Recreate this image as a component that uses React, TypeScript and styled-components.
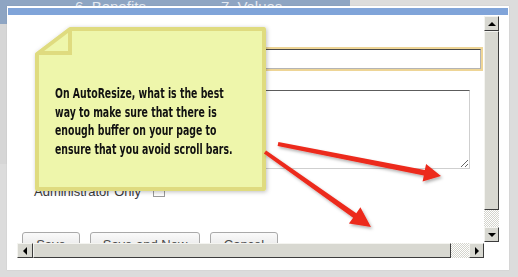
import React from 'react';
import styled, { createGlobalStyle } from 'styled-components';

const GlobalStyle = createGlobalStyle`
  html, body {
    margin: 0;
    padding: 0;
    background: #dcdcdc;
    overflow: hidden;
  }
  * {
    box-sizing: border-box;
  }
`;

const Page = styled.div`
  position: relative;
  width: 518px;
  height: 277px;
  overflow: hidden;
  background: #dcdcdc;
  font-family: 'Liberation Sans', Arial, sans-serif;
`;

const BackTabs = styled.div`
  width: 350px;
  height: 24px;
  background: #8ea5c3;
  display: flex;
  gap: 75px;
  padding: 0 0 0 75px;
`;

const BackTab = styled.span`
  color: #e3e9f1;
  font-size: 15px;
  line-height: 17px;
  margin-top: -2px;
`;

const LeftStrip = styled.div`
  width: 8px;
  height: 140px;
  background: #d6d6d6;
  border-left: 2px solid transparent;
`;

const Window = styled.div`
  position: absolute;
  left: 7px;
  top: 6px;
  width: 502px;
  height: 264px;
  background: #ffffff;
  padding: 2px 1px 0 1px;
  box-shadow: 0 0 1px rgba(0, 0, 0, 0.15);
`;

const TitleBar = styled.div`
  height: 7px;
  background: #80a4d9;
`;

const Frame = styled.div`
  margin: 1px 0 0 9px;
  display: grid;
  grid-template-columns: 467px 15px;
  grid-template-rows: 227px 15px;
`;

const Viewport = styled.div`
  overflow: hidden;
  background: #ffffff;
  position: relative;
`;

const Form = styled.div`
  display: flex;
  flex-direction: column;
  padding-top: 33px;
`;

const TextField = styled.div`
  margin-left: 115px;
  margin-right: 3px;
  height: 20px;
  border: 1px solid #b4b4b4;
  border-top-color: #4a4a4a;
  box-shadow: 0 0 0 2px #eed596;
  background: #fff;
`;

const TextArea = styled.textarea`
  display: block;
  margin: 21px 14px 0 115px;
  width: calc(100% - 129px);
  height: 79px;
  border: 1px solid #cfcfcf;
  border-top-color: #5c5c5c;
  border-left-color: #8a8a8a;
  background: #fff;
  resize: both;
  outline: none;
`;

const CheckRow = styled.div`
  display: flex;
  align-items: center;
  gap: 12px;
  margin: 15px 0 0 17px;
  height: 14px;
`;

const Label = styled.span`
  font-size: 13px;
  color: #3a3a3a;
`;

const CheckBox = styled.span`
  width: 12px;
  height: 12px;
  border: 1px solid #9a9a9a;
  background: linear-gradient(#f4f4f4, #ffffff);
`;

const ButtonRow = styled.div`
  display: flex;
  gap: 10px;
  margin: 34px 0 0 5px;
`;

const Button = styled.button<{ w: number }>`
  width: ${(p) => p.w}px;
  height: 22px;
  border: 1px solid #a9a9a9;
  border-radius: 3px;
  background: linear-gradient(#fafafa, #e2e2e2);
  font-family: 'Liberation Sans', Arial, sans-serif;
  font-size: 13px;
  color: #4a4a4a;
  padding: 4px 0 0 0;
  display: flex;
  justify-content: center;
  align-items: flex-start;
`;

const VBar = styled.div`
  display: grid;
  grid-template-rows: 15px 179px 17px 15px;
`;

const HBar = styled.div`
  display: grid;
  grid-template-columns: 16px 418px 18px 15px;
`;

const Corner = styled.div`
  background: #ffffff;
`;

const ArrowButton = styled.div`
  background: #d8d8d1;
  border: 1px solid;
  border-color: #f4f4f0 #3c3c3c #3c3c3c #f4f4f0;
  display: flex;
  align-items: center;
  justify-content: center;
`;

const Thumb = styled.div`
  background: #d8d8d1;
  border: 1px solid;
  border-color: #f4f4f0 #3c3c3c #3c3c3c #f4f4f0;
`;

const Track = styled.div`
  background-color: #ffffff;
  background-image: repeating-conic-gradient(#d4d4cc 0% 25%, #ffffff 0% 50%);
  background-size: 2px 2px;
`;

const Note = styled.div`
  position: absolute;
  left: 34px;
  top: 26px;
  width: 236px;
  height: 170px;
`;

const NoteShape = styled.svg`
  position: absolute;
  inset: 0;
  overflow: visible;
`;

const NoteText = styled.p`
  position: relative;
  margin: 0;
  padding: 58px 0 0 21px;
  font-family: 'DejaVu Sans Condensed', 'DejaVu Sans', sans-serif;
  font-weight: bold;
  font-size: 13.5px;
  line-height: 18.5px;
  color: #111;
  white-space: nowrap;
  transform: scaleX(0.77);
  transform-origin: 21px 0;
`;

const Arrows = styled.svg`
  position: absolute;
  left: 0;
  top: 0;
  pointer-events: none;
`;

const Tri = ({ dir }: { dir: 'up' | 'down' | 'left' | 'right' }) => {
  const pts = {
    up: '0,5 8,5 4,1',
    down: '0,1 8,1 4,5',
    left: '5,0 5,8 1,4',
    right: '1,0 1,8 5,4',
  }[dir];
  const vertical = dir === 'up' || dir === 'down';
  return (
    <svg width={vertical ? 8 : 6} height={vertical ? 6 : 8}>
      <polygon points={pts} fill="#000" />
    </svg>
  );
};

const arrowPath = (x1: number, y1: number, x2: number, y2: number, head: number, half: number, w: number) => {
  const dx = x2 - x1;
  const dy = y2 - y1;
  const len = Math.hypot(dx, dy);
  const ux = dx / len;
  const uy = dy / len;
  const px = -uy;
  const py = ux;
  const bx = x2 - ux * head;
  const by = y2 - uy * head;
  const p = (x: number, y: number) => `${x.toFixed(1)},${y.toFixed(1)}`;
  return [
    p(x1 + px * (w * 0.35), y1 + py * (w * 0.35)),
    p(bx + px * (w / 2), by + py * (w / 2)),
    p(bx + px * half, by + py * half),
    p(x2, y2),
    p(bx - px * half, by - py * half),
    p(bx - px * (w / 2), by - py * (w / 2)),
    p(x1 - px * (w * 0.35), y1 - py * (w * 0.35)),
  ].join(' ');
};

export default function App() {
  return (
    <Page>
      <GlobalStyle />
      <BackTabs>
        <BackTab>6. Benefits</BackTab>
        <BackTab>7. Values</BackTab>
      </BackTabs>
      <LeftStrip />

      <Window>
        <TitleBar />
        <Frame>
          <Viewport>
            <Form>
              <TextField />
              <TextArea defaultValue="" />
              <CheckRow>
                <Label>Administrator Only</Label>
                <CheckBox />
              </CheckRow>
              <ButtonRow>
                <Button w={58}>Save</Button>
                <Button w={110}>Save and New</Button>
                <Button w={68}>Cancel</Button>
              </ButtonRow>
            </Form>
          </Viewport>
          <VBar>
            <ArrowButton><Tri dir="up" /></ArrowButton>
            <Thumb />
            <Track />
            <ArrowButton><Tri dir="down" /></ArrowButton>
          </VBar>
          <HBar>
            <ArrowButton><Tri dir="left" /></ArrowButton>
            <Thumb />
            <Track />
            <ArrowButton><Tri dir="right" /></ArrowButton>
          </HBar>
          <Corner />
        </Frame>
      </Window>

      <Note>
        <NoteShape width={236} height={170}>
          <defs>
            <filter id="noteShadow" x="-10%" y="-10%" width="120%" height="120%">
              <feDropShadow dx="1" dy="1" stdDeviation="2" floodColor="#000" floodOpacity="0.25" />
            </filter>
          </defs>
          <polygon
            points="36,3 230,3 230,163 3,163 3,28"
            fill="#eef6ab"
            stroke="#dfdb7f"
            strokeWidth={4}
            strokeLinejoin="round"
            filter="url(#noteShadow)"
          />
          <polyline points="36,3 36,27 5,27" fill="none" stroke="#dfdb7f" strokeWidth={4} />
        </NoteShape>
        <NoteText>
          On AutoResize, what is the best
          <br />
          way to make sure that there is
          <br />
          enough buffer on your page to
          <br />
          ensure that you avoid scroll bars.
        </NoteText>
      </Note>

      <Arrows width={518} height={277}>
        <defs>
          <filter id="arrowShadow" x="-10%" y="-10%" width="130%" height="130%">
            <feDropShadow dx="1.5" dy="2" stdDeviation="1.5" floodColor="#000" floodOpacity="0.3" />
          </filter>
        </defs>
        <polygon points={arrowPath(278, 144, 441, 176, 17, 9, 5.5)} fill="#ec2a1c" filter="url(#arrowShadow)" />
        <polygon points={arrowPath(265, 152, 371, 227, 20, 10, 5.5)} fill="#ec2a1c" filter="url(#arrowShadow)" />
      </Arrows>
    </Page>
  );
}
